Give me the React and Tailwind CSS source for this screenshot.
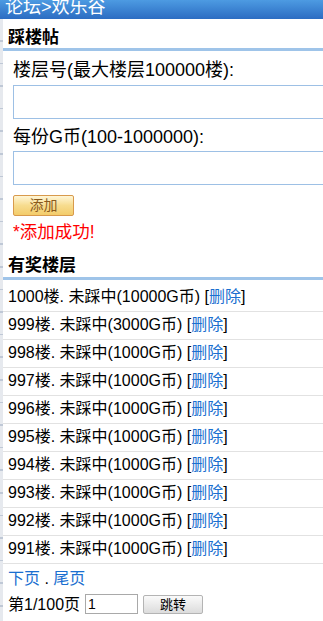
const rows = [
  { floor: 1000, coins: 10000 },
  { floor: 999, coins: 3000 },
  { floor: 998, coins: 1000 },
  { floor: 997, coins: 1000 },
  { floor: 996, coins: 1000 },
  { floor: 995, coins: 1000 },
  { floor: 994, coins: 1000 },
  { floor: 993, coins: 1000 },
  { floor: 992, coins: 1000 },
  { floor: 991, coins: 1000 },
];

export default function App() {
  return (
    <div className="w-[323px] h-[621px] overflow-hidden bg-white text-black font-['Liberation_Sans','Noto_Sans_CJK_SC',sans-serif]">
      {/* title bar, clipped at the top */}
      <div className="h-[19px] overflow-hidden bg-gradient-to-b from-[#4d9be2] to-[#2c6cc2] pl-[5px]">
        <div className="text-[18px] leading-[18px] text-white -mt-[2px]">论坛&gt;欢乐谷</div>
      </div>

      <div className="flex">
        <div className="w-[3px] shrink-0 h-[602px] bg-[repeating-linear-gradient(to_bottom,#e6e9ee_0px,#e6e9ee_21px,#bfc8d6_21px,#bfc8d6_22.6px)]" />
        <div className="flex-1 min-w-0">
          <h2 className="pl-[5px] pt-[9px] h-[29px] text-[17px] leading-[19px] font-bold">踩楼帖</h2>
          <div className="h-[3px] bg-[#9fc4e9]" />

          <div className="pl-[10px] pt-[10px]">
            <div className="text-[18px] leading-[18px] whitespace-nowrap">楼层号(最大楼层100000楼):</div>
            <input className="mt-[6px] block w-[320px] h-[34px] border border-[#9dc0e5] outline-none" />
            <div className="mt-[9px] text-[18px] leading-[18px] whitespace-nowrap">每份G币(100-1000000):</div>
            <input className="mt-[5px] block w-[320px] h-[34px] border border-[#9dc0e5] outline-none" />
            <button className="mt-[10px] block w-[61px] h-[21px] rounded-[2px] border border-[#d89a4c] bg-gradient-to-b from-[#fff6d6] via-[#f7dc8e] to-[#f3cc6a] text-[14px] leading-[17px] text-[#8a5a1c]">添加</button>
            <div className="mt-[7px] text-[17.5px] leading-[18px] text-[#ff0000]">*添加成功!</div>
          </div>

          <h2 className="mt-[15px] pl-[5px] h-[21px] text-[17px] leading-[19px] font-bold">有奖楼层</h2>
          <div className="h-[3px] bg-[#9fc4e9]" />

          <ul className="mt-[4px]">
            {rows.map((r) => (
              <li key={r.floor} className="h-[28px] pl-[5px] pt-[5px] text-[16px] leading-[16px] border-b border-[#e2e2e2] whitespace-nowrap">
                {r.floor}楼. 未踩中({r.coins}G币) [<a className="text-[#1a6fd0]">删除</a>]
              </li>
            ))}
          </ul>

          <div className="pl-[5px] pt-[6px] text-[16px] leading-[17px]">
            <a className="text-[#1a6fd0]">下页</a> . <a className="text-[#1a6fd0]">尾页</a>
          </div>
          <div className="pl-[5px] mt-[7px] h-[20px] flex items-center text-[16px] leading-[17px]">
            <span>第1/100页</span>
            <input defaultValue="1" className="ml-[5px] w-[53px] h-[20px] border border-[#a9a9a9] px-[2px] text-[14px] leading-[16px] outline-none" />
            <button className="ml-[5px] w-[60px] h-[19px] border border-[#b4b4b4] rounded-[2px] bg-gradient-to-b from-[#fafafa] to-[#dcdcdc] text-[13px] leading-[15px]">跳转</button>
          </div>
        </div>
      </div>
    </div>
  );
}
